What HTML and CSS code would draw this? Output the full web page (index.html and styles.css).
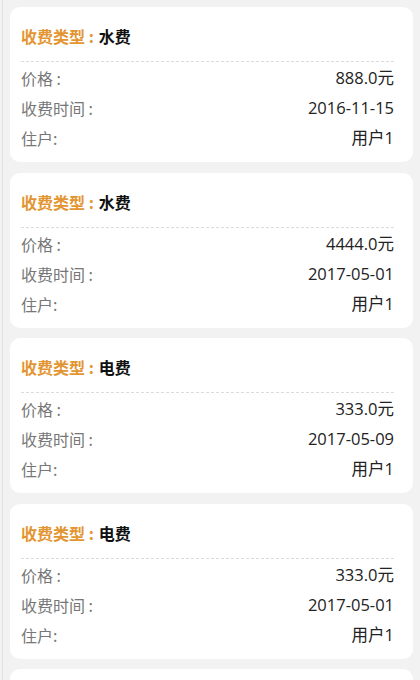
FILE: index.html
```html
<!DOCTYPE html>
<html lang="zh-CN">
  <head>
    <meta charset="UTF-8" />
    <meta name="viewport" content="width=device-width, initial-scale=1.0" />
    <title>收费记录</title>
    <link rel="stylesheet" href="styles.css">
  </head>
  <body>
    <div class="list">
      <div class="card">
        <div class="card-head"><span class="type-label">收费类型 :</span><span class="type-value">水费</span></div>
        <div class="card-body">
          <div class="row"><span class="label">价格 :</span><span class="value">888.0元</span></div>
          <div class="row"><span class="label">收费时间 :</span><span class="value">2016-11-15</span></div>
          <div class="row"><span class="label">住户:</span><span class="value">用户1</span></div>
        </div>
      </div>
      <div class="card">
        <div class="card-head"><span class="type-label">收费类型 :</span><span class="type-value">水费</span></div>
        <div class="card-body">
          <div class="row"><span class="label">价格 :</span><span class="value">4444.0元</span></div>
          <div class="row"><span class="label">收费时间 :</span><span class="value">2017-05-01</span></div>
          <div class="row"><span class="label">住户:</span><span class="value">用户1</span></div>
        </div>
      </div>
      <div class="card">
        <div class="card-head"><span class="type-label">收费类型 :</span><span class="type-value">电费</span></div>
        <div class="card-body">
          <div class="row"><span class="label">价格 :</span><span class="value">333.0元</span></div>
          <div class="row"><span class="label">收费时间 :</span><span class="value">2017-05-09</span></div>
          <div class="row"><span class="label">住户:</span><span class="value">用户1</span></div>
        </div>
      </div>
      <div class="card">
        <div class="card-head"><span class="type-label">收费类型 :</span><span class="type-value">电费</span></div>
        <div class="card-body">
          <div class="row"><span class="label">价格 :</span><span class="value">333.0元</span></div>
          <div class="row"><span class="label">收费时间 :</span><span class="value">2017-05-01</span></div>
          <div class="row"><span class="label">住户:</span><span class="value">用户1</span></div>
        </div>
      </div>
      <div class="card card-more"></div>
    </div>
  </body>
</html>
```

FILE: styles.css
```css
body {
  margin: 0;
  font-family: "Noto Sans CJK SC", "Noto Sans", sans-serif;
  background-color: #f2f2f2;
  height: 680px;
  overflow: hidden;
}
.list {
  display: flex;
  flex-direction: column;
  gap: 10.5px;
  padding: 7px 7px 0 7px;
  margin-left: 2px;
  border-left: 1px solid #e2e2e2;
}
.card {
  background-color: #fff;
  border-radius: 10px;
  padding: 0 19px 0 11px;
}
.card-more {
  height: 40px;
}
.card-head {
  padding: 19px 0 15px;
  line-height: 20px;
  font-size: 16px;
  font-weight: bold;
  border-bottom: 1px dashed #dcdcdc;
}
.type-label {
  color: #e39532;
  margin-right: 5px;
}
.type-value {
  color: #111;
}
.card-body {
  padding: 1px 0 9px;
}
.row {
  display: flex;
  justify-content: space-between;
  align-items: center;
  height: 30px;
  line-height: 30px;
}
.label {
  color: #777;
  font-size: 16px;
}
.value {
  color: #222;
  font-family: "Open Sans", "Noto Sans CJK SC", sans-serif;
  font-size: 16.5px;
}
```
